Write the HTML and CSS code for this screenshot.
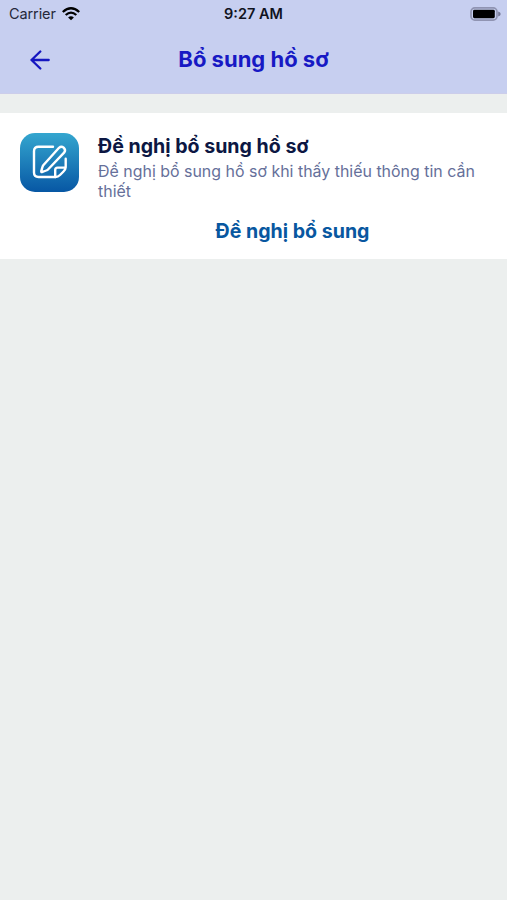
FILE: index.html
```html
<!DOCTYPE html>
<html lang="vi">
<head>
<meta charset="utf-8">
<meta name="viewport" content="width=device-width">
<title>Bổ sung hồ sơ</title>
<link rel="stylesheet" href="styles.css">
</head>
<body>
<header class="header">
  <div class="status">
    <div class="carrier"><span class="carrier-name">Carrier</span>
      <svg class="wifi" width="18" height="14" viewBox="0 0 18 14" fill="none" stroke="#000" stroke-width="2.3"><path d="M.8 5Q9-2.4 17.2 5M3.7 8Q9 3.2 14.3 8"/><path d="M6.1 10.4Q9 8 11.9 10.4L9 13.3Z" fill="#000" stroke="none"/></svg>
    </div>
    <time class="clock">9:27 AM</time>
    <svg class="battery" width="31" height="14" viewBox="0 0 31 14"><rect x="1" y=".9" width="26" height="12.2" rx="3.8" fill="none" stroke="#9094b2" stroke-width="1.7"/><rect x="3" y="2.8" width="21.8" height="8.4" rx="1.4"/><path d="M28.2 4.4Q30.7 5.2 30.7 7T28.2 9.6Z" fill="#777b98"/></svg>
  </div>
  <nav class="navbar">
    <a class="back" href="#" aria-label="Quay lại"><svg width="20" height="20" viewBox="0 0 20 20" fill="none" stroke="#1516c0" stroke-width="2.3" stroke-linecap="round" stroke-linejoin="round"><path d="M18.7 10H1.5M10.3 1.5 1.5 10l8.8 8.5"/></svg></a>
    <h1 class="title">Bổ sung hồ sơ</h1>
  </nav>
</header>
<main class="card">
  <svg class="app-icon" width="59" height="59" viewBox="0 0 59 59">
    <defs><linearGradient id="blue" x1="0" y1="0" x2="0" y2="1"><stop stop-color="#34a6cf"/><stop offset="1" stop-color="#0757a4"/></linearGradient></defs>
    <rect width="59" height="59" rx="15" fill="url(#blue)"/>
    <g fill="none" stroke="#fff" stroke-width="2.4" stroke-linecap="round" stroke-linejoin="round"><path d="M33 13.8H18.5Q14 13.8 14 18.3V39.5Q14 44 18.5 44H35.5Q38 44 40 42L43.5 38.5Q45.7 36.3 45.7 33.5V25.8"/><path d="M35.2 44V37Q35.2 34.6 37.6 34.6H45.3"/><path d="M39 14.8Q41.3 12.7 43.7 14.7Q46.2 17.2 44.1 19.7L28 36.5Q27 37.5 22 39Q21 39.2 21.3 38.2Q22.5 33.2 23.3 32.2Z"/></g>
  </svg>
  <div class="content">
    <h2 class="heading">Đề nghị bổ sung hồ sơ</h2>
    <p class="description">Đề nghị bổ sung hồ sơ khi thấy thiếu thông tin cần thiết</p>
    <a class="action" href="#">Đề nghị bổ sung</a>
  </div>
</main>
</body>
</html>
```
FILE: styles.css
```css
* { box-sizing: border-box; }
body { margin: 0; min-height: 100vh; background: #ecefee; font-family: Inter, "Liberation Sans", sans-serif; }
h1, h2, p { margin: 0; }
a { text-decoration: none; }
svg { display: block; flex: none; }
.header { height: 94px; background: #c7cff0; border-bottom: 1px solid #cccdea; }
.status { display: grid; grid-template-columns: 1fr auto 1fr; align-items: center; height: 27px; padding: 0 6px 0 9px; }
.carrier { display: flex; align-items: center; gap: 6px; font-size: 14.5px; color: #25283a; }
.carrier-name { width: 47px; white-space: nowrap; letter-spacing: -.1px; }
.clock { font-size: 14.5px; font-weight: 600; color: #11131e; margin-left: -3px; }
.battery { justify-self: end; }
.navbar { display: grid; grid-template-columns: 40px 1fr 40px; align-items: center; height: 65px; padding: 0 30px; }
.title { font-size: 22px; line-height: 28px; font-weight: 700; text-align: center; color: #1719c4; white-space: nowrap; padding-bottom: 2px; }
.card { display: flex; gap: 19px; height: 146px; margin-top: 19px; padding: 20px 20px 0; background: #fff; }
.content { flex: 1; display: flex; flex-direction: column; }
.heading { font-size: 19.6px; line-height: 26px; font-weight: 700; color: #0c1743; white-space: nowrap; }
.description { margin-top: 3px; font-size: 15.95px; line-height: 19.5px; color: #66709a; }
.action { align-self: center; margin-top: 17px; font-size: 19.6px; line-height: 26px; font-weight: 700; color: #0857a0; white-space: nowrap; }
```
